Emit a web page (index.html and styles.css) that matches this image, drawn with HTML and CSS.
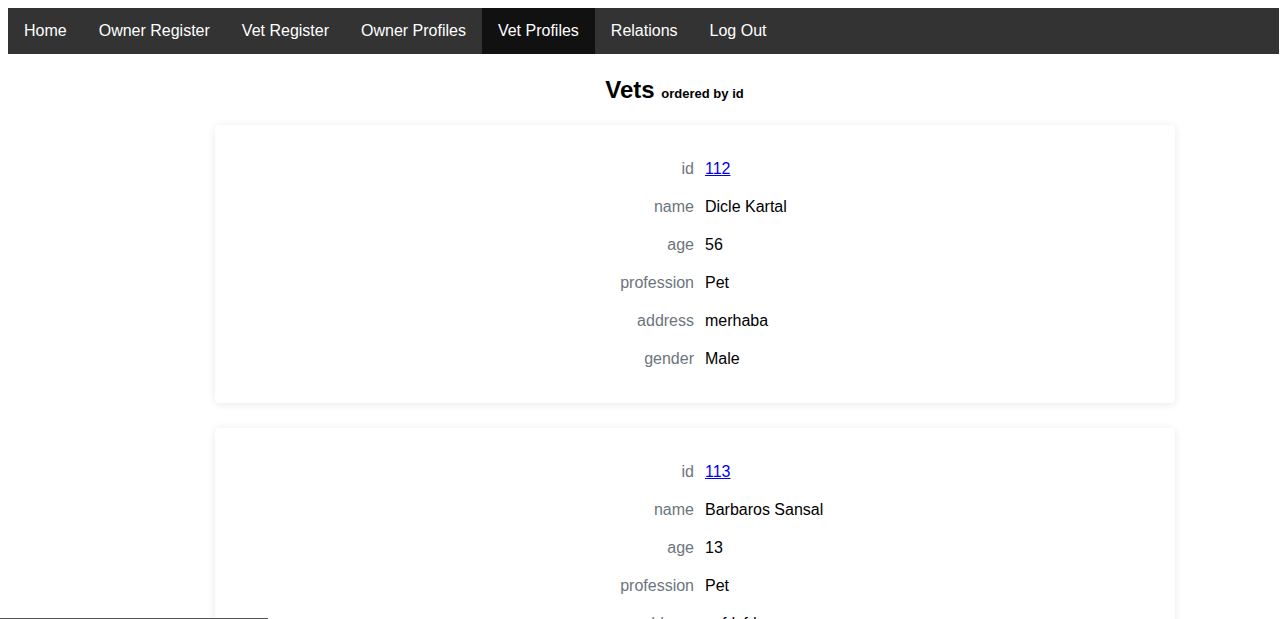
FILE: index.html
```html
<!DOCTYPE html>
<html>
<head>
<meta charset="utf-8">
<title>Vets</title>
<link rel="stylesheet" href="styles.css">
</head>
<body>
<nav class="topnav">
  <a class="nav-item" href="#">Home</a>
  <a class="nav-item" href="#">Owner Register</a>
  <a class="nav-item" href="#">Vet Register</a>
  <a class="nav-item" href="#">Owner Profiles</a>
  <a class="nav-item active" href="#">Vet Profiles</a>
  <a class="nav-item" href="#">Relations</a>
  <a class="nav-item" href="#">Log Out</a>
</nav>
<main class="content">
  <h2 class="page-title">Vets <small class="subtitle">ordered by id</small></h2>
  <section class="card">
    <div class="row"><span class="label">id</span><a class="value link" href="#">112</a></div>
    <div class="row"><span class="label">name</span><span class="value">Dicle Kartal</span></div>
    <div class="row"><span class="label">age</span><span class="value">56</span></div>
    <div class="row"><span class="label">profession</span><span class="value">Pet</span></div>
    <div class="row"><span class="label">address</span><span class="value">merhaba</span></div>
    <div class="row"><span class="label">gender</span><span class="value">Male</span></div>
  </section>
  <section class="card">
    <div class="row"><span class="label">id</span><a class="value link" href="#">113</a></div>
    <div class="row"><span class="label">name</span><span class="value">Barbaros Sansal</span></div>
    <div class="row"><span class="label">age</span><span class="value">13</span></div>
    <div class="row"><span class="label">profession</span><span class="value">Pet</span></div>
    <div class="row"><span class="label">address</span><span class="value">asfdsfdsa</span></div>
    <div class="row"><span class="label">gender</span><span class="value">Male</span></div>
  </section>
</main>
<div class="status-line"></div>
</body>
</html>
```

FILE: styles.css
```css
html, body {
  margin: 0;
  padding: 0;
}
body {
  margin: 8px;
  font-family: "Liberation Sans", Arial, sans-serif;
  font-size: 16px;
  color: #000;
  background: #fff;
}
.topnav {
  display: flex;
  background: #333;
  height: 46px;
}
.nav-item {
  display: block;
  color: #fff;
  text-decoration: none;
  padding: 0 16px;
  line-height: 46px;
  font-size: 16px;
}
.nav-item.active {
  background: #111;
}
.content {
  margin-left: 207px;
  width: 960px;
}
.page-title {
  margin: 21px 0 0;
  padding-right: 41px;
  text-align: center;
  font-size: 24px;
  font-weight: bold;
  line-height: 30px;
  height: 50px;
}
.subtitle {
  font-size: 13px;
  font-weight: bold;
}
.card {
  background: #fff;
  border-radius: 4px;
  box-shadow: 0 1px 8px rgba(0, 0, 0, 0.09);
  padding: 25px 0 25px;
  margin-bottom: 25px;
}
.row {
  display: grid;
  grid-template-columns: 479px 1fr;
  column-gap: 11px;
  height: 38px;
  align-items: center;
}
.label {
  text-align: right;
  color: #6c757d;
}
.value {
  color: #000;
}
.link {
  color: #0000ee;
  text-decoration: underline;
  justify-self: start;
}
.status-line {
  position: fixed;
  left: 0;
  bottom: 0;
  width: 268px;
  height: 1px;
  background: #555;
}
```
